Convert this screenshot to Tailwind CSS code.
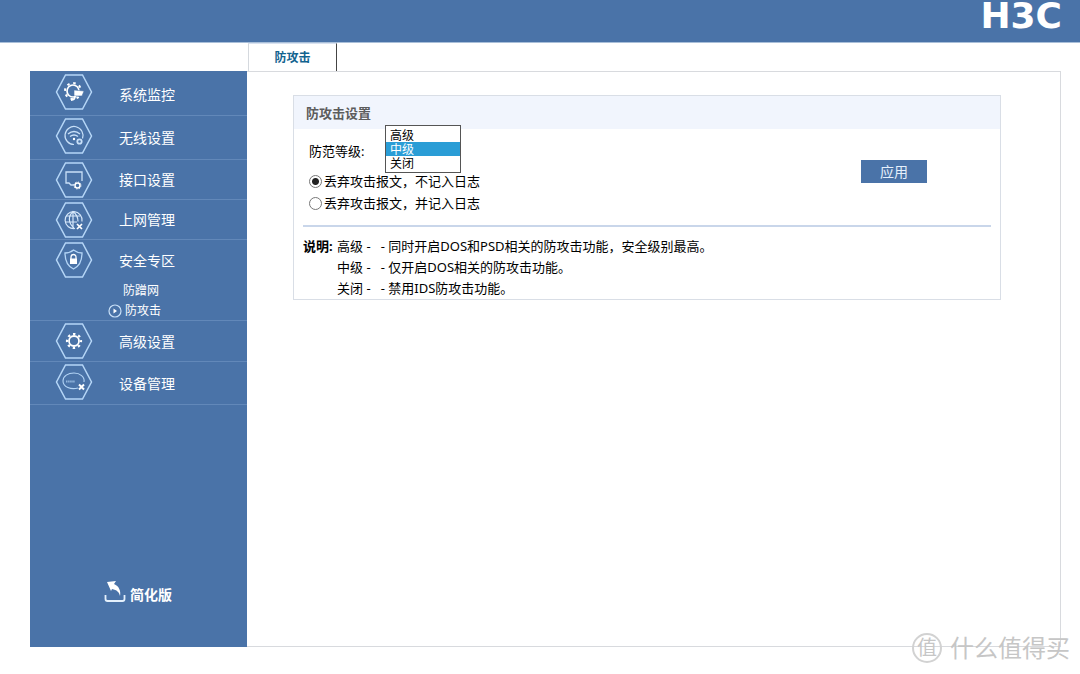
<!DOCTYPE html>
<html lang="zh-CN">
<head>
<meta charset="utf-8">
<title>防攻击</title>
<script src="https://cdn.jsdelivr.net/npm/@tailwindcss/browser@4"></script>
</head>
<body class="flex min-h-screen flex-col bg-white font-['Noto_Sans','Noto_Sans_CJK_SC',sans-serif] text-[13px] text-black">
<svg class="hidden">
  <symbol id="hex" viewBox="0 0 38 36"><path d="M10.500 1h17L36.500 18l-9 17h-17L1.500 18z" fill="none" stroke="#b5d6f7" stroke-width="1.500"/></symbol>
</svg>
<header class="flex h-[43px] shrink-0 items-start justify-end border-b border-[#a9bfd9] bg-[#4a73a8] pr-[18px]">
  <span class="font-['DejaVu_Sans',sans-serif] text-[36px] leading-8 font-bold text-white">H3C</span>
</header>
<nav class="ml-[248px] flex h-7 shrink-0">
  <a href="#" class="flex w-[89px] items-center justify-center border-t border-r border-l border-t-[#d9e2f0] border-l-[#d5d9de] border-r-[#444] text-[12px] font-bold text-[#12638f]">防攻击</a>
</nav>
<div class="mr-[19px] mb-[27px] ml-[30px] flex flex-1">
  <aside class="flex w-[217px] shrink-0 flex-col bg-[#4a73a8] text-[14px] text-white">
    <a href="#" class="flex h-[45px] items-center gap-[26px] border-b border-[#6288b9] pl-[25px]">
      <svg class="mt-[3px] h-9 w-[38px] self-start" viewBox="0 0 38 36"><use href="#hex"/>
        <circle cx="18" cy="17" r="6" fill="none" stroke="#fff" stroke-width="1.700"/><circle cx="18" cy="17" r="8" fill="none" stroke="#fff" stroke-width="2" stroke-dasharray="2.500 3.780"/>
        <path d="M19 16l10 1-2 5h-8z" fill="#fff" stroke="#4a73a8" stroke-width=".6"/><path d="M20 22c0 3-1 4-4 4" fill="none" stroke="#fff" stroke-width="1.800"/></svg>
      <span class="pt-0.5">系统监控</span></a>
    <a href="#" class="flex h-11 items-center gap-[26px] border-b border-[#6288b9] pl-[25px]">
      <svg class="mt-0.5 h-9 w-[38px] self-start" viewBox="0 0 38 36"><use href="#hex"/>
        <g fill="none" stroke="#c9e0f8" stroke-width="1.200"><path d="M19 26.500a9 9 0 1 1 8.500-6"/><path d="M13 16q6-5 12 0M15 18.500q4-3 8 0" stroke-width="1.500"/><circle cx="24.500" cy="23.500" r="2.200" stroke-width="1.800"/></g><circle cx="19" cy="21" r="1.200" fill="#fff"/></svg>
      <span>无线设置</span></a>
    <a href="#" class="flex h-10 items-center gap-[26px] border-b border-[#6288b9] pl-[25px]">
      <svg class="mt-0.5 h-9 w-[38px] self-start" viewBox="0 0 38 36"><use href="#hex"/>
        <path d="M19 23h-3l-2-2h-3V10h16v9" fill="none" stroke="#c9e0f8" stroke-width="1.300"/><circle cx="22.500" cy="23.500" r="2.500" fill="none" stroke="#fff" stroke-width="1.500"/><circle cx="22.500" cy="23.500" r="3.500" fill="none" stroke="#fff" stroke-width="1" stroke-dasharray="1.200 1.550"/></svg>
      <span>接口设置</span></a>
    <a href="#" class="flex h-10 items-center gap-[26px] border-b border-[#6288b9] pl-[25px]">
      <svg class="mt-0.5 h-9 w-[38px] self-start" viewBox="0 0 38 36"><use href="#hex"/>
        <g fill="none" stroke="#d5e7fa" stroke-width="1.200"><path d="M20 26.500a8.500 8.500 0 1 1 7-7"/><path d="M19 26c-6-5-6-12-1-16.500 4 3 5 6 5 10M18 9.500V26M11 14h14M10 20h12"/><path d="M22 22l5 5M27 22l-5 5" stroke="#fff" stroke-width="1.700"/></g></svg>
      <span>上网管理</span></a>
    <div class="h-[81px] border-b border-[#6288b9]">
      <a href="#" class="flex h-[41px] items-center gap-[26px] pl-[25px]">
        <svg class="mt-0.5 h-9 w-[38px] self-start" viewBox="0 0 38 36"><use href="#hex"/>
          <path d="M18.500 8q4 3 8.500 3c0 8-2 13-8.500 16C12 24 10 19 10 11q5 0 8.500-3z" fill="none" stroke="#b5d6f7" stroke-width="1.300"/><path d="M15 16.500h7v5.500h-7z" fill="#fff"/><path d="M16 17v-2a2.500 2.500 0 0 1 5 0v2" fill="none" stroke="#fff" stroke-width="1.300"/></svg>
        <span>安全专区</span></a>
      <a href="#" class="block pl-[93px] text-[12px] leading-5">防蹭网</a>
      <a href="#" class="flex items-center gap-[3px] pl-[78px] text-[12px] leading-5">
        <svg class="size-3.5" viewBox="0 0 14 14"><circle cx="7" cy="7" r="6" fill="none" stroke="#c9e0f8" stroke-width="1.200"/><path d="M5.500 4.500L9 7 5.500 9.500z" fill="#fff"/></svg>防攻击</a>
    </div>
    <a href="#" class="flex h-[41px] items-center gap-[26px] border-b border-[#6288b9] pl-[25px]">
      <svg class="mt-0.5 h-9 w-[38px] self-start" viewBox="0 0 38 36"><use href="#hex"/>
        <circle cx="19" cy="18" r="5" fill="none" stroke="#fff" stroke-width="1.800"/><circle cx="19" cy="18" r="7" fill="none" stroke="#fff" stroke-width="2.200" stroke-dasharray="2.400 3.098" stroke-dashoffset="1.200"/></svg>
      <span>高级设置</span></a>
    <a href="#" class="flex h-[43px] items-center gap-[26px] border-b border-[#6288b9] pl-[25px]">
      <svg class="mt-0.5 h-9 w-[38px] self-start" viewBox="0 0 38 36"><use href="#hex"/>
        <path d="M23 24c-7 2-15-1-15-7 0-5 5-8 11-8s11 4 10 9" fill="none" stroke="#b5d6f7" stroke-width="1.100"/><path d="M11 17.500h9" stroke="#b5d6f7" stroke-width="2" stroke-dasharray="1.500 .6" opacity=".7"/><path d="M24 20.500l5 5M29 20.500l-5 5" stroke="#fff" stroke-width="2"/></svg>
      <span>设备管理</span></a>
    <a href="#" class="mt-auto mb-[42px] flex items-start gap-1 pl-[74px] font-bold">
      <svg class="h-6 w-[22px]" viewBox="0 0 22 24"><path d="M1.500 15v4q0 2 2 2h15q2 0 2-2v-4" fill="none" stroke="#e4f0fc" stroke-width="1.800"/><path d="M3 2l9-1-2 3c5 2 7 7 6 12-1-4-3-6-8-7l-1 2z" fill="#fff"/></svg>
      <span class="pt-1">简化版</span></a>
  </aside>
  <main class="flex-1 border border-l-0 border-[#d8dade] pt-[23px] pr-[59px] pl-[46px]">
    <section class="border border-[#d9dee6]">
      <h1 class="h-[33px] bg-[#f1f5fd] pl-3 leading-[35px] font-bold text-[#5c5c5c]">防攻击设置</h1>
      <form class="mx-[9px] flex h-[98px] items-start border-b-2 border-[#c9d6ea] pl-1.5">
        <div class="relative flex-1">
          <label for="level" class="block pt-3 leading-5">防范等级:</label>
          <select id="level" size="3" class="absolute -top-1 left-[76px] h-12 w-[76px] overflow-hidden border border-[#555] bg-white p-0 pt-0.5 text-[12px]">
            <option class="flex h-3.5 min-h-0 items-center px-1 py-0">高级</option>
            <option selected class="flex h-3.5 min-h-0 items-center bg-linear-to-r from-[#2a9dd6] to-[#2a9dd6] px-1 py-0 text-white [-webkit-text-fill-color:white]">中级</option>
            <option class="flex h-3.5 min-h-0 items-center px-1 py-0">关闭</option>
          </select>
          <label class="mt-[9px] flex items-center gap-0.5 leading-[22px]"><input type="radio" name="log" checked class="size-[13px] appearance-none rounded-full border border-[#777] bg-white checked:bg-[radial-gradient(circle,#222_3px,#fff_4px)]">丢弃攻击报文，不记入日志</label>
          <label class="flex items-center gap-0.5 leading-[22px]"><input type="radio" name="log" class="size-[13px] appearance-none rounded-full border border-[#777] bg-white checked:bg-[radial-gradient(circle,#222_3px,#fff_4px)]">丢弃攻击报文，并记入日志</label>
        </div>
        <button type="button" class="mt-[31px] mr-16 h-[23px] w-[66px] bg-[#4a73a8] text-[14px] leading-[23px] text-[#e5f0fc]">应用</button>
      </form>
      <div class="grid grid-cols-[34px_1fr] pt-[9px] pl-[9px] leading-[21px]">
        <b>说明:</b>
        <div><p>高级 -&nbsp;&nbsp; - 同时开启DOS和PSD相关的防攻击功能，安全级别最高。</p><p>中级 -&nbsp;&nbsp; - 仅开启DOS相关的防攻击功能。</p><p>关闭 -&nbsp;&nbsp; - 禁用IDS防攻击功能。</p></div>
      </div>
    </section>
  </main>
</div>
<div class="absolute right-2.5 bottom-2 flex items-center gap-2 text-[#c6c6c6]">
  <span class="flex size-[30px] items-center justify-center rounded-full border-2 border-[#d2d2d2] text-[20px] leading-none">值</span>
  <span class="text-[24px] leading-9">什么值得买</span>
</div>
</body>
</html>
